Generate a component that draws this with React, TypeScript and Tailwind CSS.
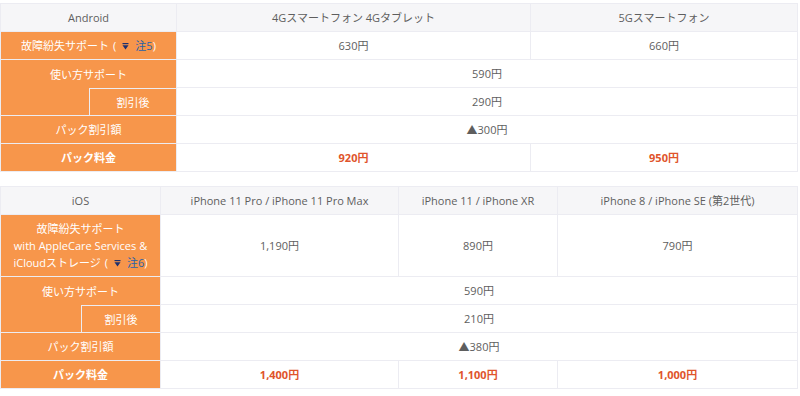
import React from "react";

const font = { fontFamily: '"Open Sans", "Noto Sans CJK JP", sans-serif' };

const O = "bg-[#f7964b] text-white border-r border-b border-[#ececf2] text-center align-middle";
const W = "bg-white text-[#5e5e5e] border-r border-b border-[#ececf2] text-center align-middle";
const H = "bg-[#f6f6f8] text-[#5e5e5e] border-r border-b border-t border-[#ececf2] text-center align-middle h-[29px]";
const R = "text-[#e0542b] font-bold";

function Icon() {
  return (
    <svg width="7" height="7" viewBox="0 0 7 7" className="inline-block mx-[6px] align-[0px]">
      <rect x="0.5" y="0" width="6" height="1.2" fill="#1d2f6e" />
      <path d="M0.5 2.2 L6.5 2.2 L3.5 6.6 Z" fill="#1d2f6e" />
    </svg>
  );
}

function Note({ n }: { n: string }) {
  return (
    <>
      <span className="ml-[4px]">(</span>
      <Icon />
      <span className="text-[#2a62a6]">注{n}</span>)
    </>
  );
}

export default function App() {
  return (
    <div className="w-[800px] h-[396px] bg-white pt-[3px] text-[11px] leading-[17px]" style={font}>
      <table className="border-separate border-spacing-0 table-fixed w-[797px] border-l border-[#ececf2]">
        <colgroup>
          <col className="w-[88px]" />
          <col className="w-[88px]" />
          <col className="w-[354px]" />
          <col className="w-[267px]" />
        </colgroup>
        <tbody>
          <tr>
            <td colSpan={2} className={H}>Android</td>
            <td className={H}>4Gスマートフォン 4Gタブレット</td>
            <td className={H}>5Gスマートフォン</td>
          </tr>
          <tr className="h-[28px]">
            <td colSpan={2} className={O}>故障紛失サポート<Note n="5" /></td>
            <td className={W}>630円</td>
            <td className={W}>660円</td>
          </tr>
          <tr className="h-[28px]">
            <td colSpan={2} className={O + " !border-b-0"}>使い方サポート</td>
            <td colSpan={2} className={W}>590円</td>
          </tr>
          <tr className="h-[28px]">
            <td className={O + " !border-r-0"}></td>
            <td className={O + " border-l border-t"}>割引後</td>
            <td colSpan={2} className={W}>290円</td>
          </tr>
          <tr className="h-[28px]">
            <td colSpan={2} className={O}>パック割引額</td>
            <td colSpan={2} className={W}>▲300円</td>
          </tr>
          <tr className="h-[28px]">
            <td colSpan={2} className={O + " font-bold"}>パック料金</td>
            <td className={W}><span className={R}>920円</span></td>
            <td className={W}><span className={R}>950円</span></td>
          </tr>
        </tbody>
      </table>

      <table className="mt-[14px] border-separate border-spacing-0 table-fixed w-[797px] border-l border-[#ececf2]">
        <colgroup>
          <col className="w-[80px]" />
          <col className="w-[80px]" />
          <col className="w-[238px]" />
          <col className="w-[159px]" />
          <col className="w-[240px]" />
        </colgroup>
        <tbody>
          <tr>
            <td colSpan={2} className={H}>iOS</td>
            <td className={H}>iPhone 11 Pro / iPhone 11 Pro Max</td>
            <td className={H}>iPhone 11 / iPhone XR</td>
            <td className={H}>iPhone 8 / iPhone SE (第2世代)</td>
          </tr>
          <tr className="h-[62px]">
            <td colSpan={2} className={O}>
              故障紛失サポート<br />with AppleCare Services &amp;<br />iCloudストレージ<Note n="6" />
            </td>
            <td className={W}>1,190円</td>
            <td className={W}>890円</td>
            <td className={W}>790円</td>
          </tr>
          <tr className="h-[28px]">
            <td colSpan={2} className={O + " !border-b-0"}>使い方サポート</td>
            <td colSpan={3} className={W}>590円</td>
          </tr>
          <tr className="h-[28px]">
            <td className={O + " !border-r-0"}></td>
            <td className={O + " border-l border-t"}>割引後</td>
            <td colSpan={3} className={W}>210円</td>
          </tr>
          <tr className="h-[28px]">
            <td colSpan={2} className={O}>パック割引額</td>
            <td colSpan={3} className={W}>▲380円</td>
          </tr>
          <tr className="h-[28px]">
            <td colSpan={2} className={O + " font-bold"}>パック料金</td>
            <td className={W}><span className={R}>1,400円</span></td>
            <td className={W}><span className={R}>1,100円</span></td>
            <td className={W}><span className={R}>1,000円</span></td>
          </tr>
        </tbody>
      </table>
    </div>
  );
}
